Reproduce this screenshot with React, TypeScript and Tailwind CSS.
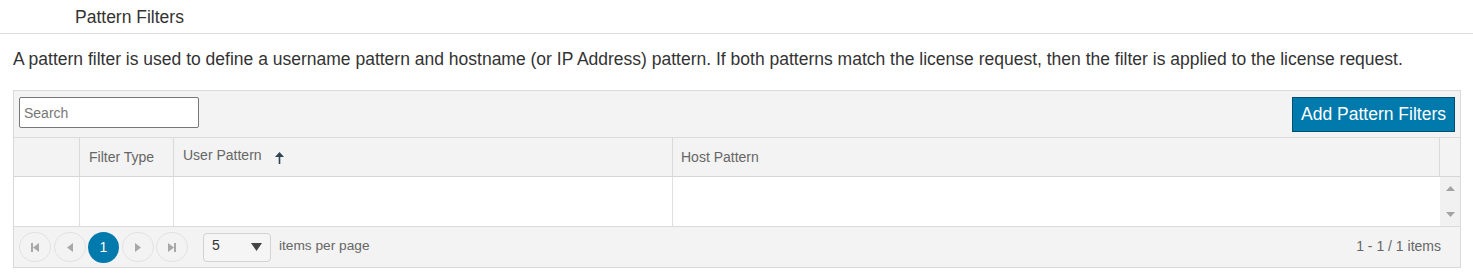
import React from "react";

const Tri = ({ dir }: { dir: "l" | "r" }) => (
  <svg width="6" height="9" viewBox="0 0 6 9" className="fill-current">
    {dir === "l" ? <polygon points="6,0 6,9 0,4.5" /> : <polygon points="0,0 0,9 6,4.5" />}
  </svg>
);

const PagerBtn = ({ children }: { children: React.ReactNode }) => (
  <div className="w-[32px] h-[30px] rounded-full border border-[#e2e2e2] flex items-center justify-center text-[#a8a8a8]">
    {children}
  </div>
);

export default function App() {
  return (
    <div className="w-[1473px] h-[279px] bg-white font-['Liberation_Sans',Arial,sans-serif] text-[#333]">
      <div className="h-[34px] border-b border-[#dcdcdc] pl-[75px] pt-[2px] flex items-center text-[17.5px] text-[#333]">
        Pattern Filters
      </div>
      <div className="mt-[15px] pl-[13px] text-[17.5px] leading-[20px] text-[#333]">
        A pattern filter is used to define a username pattern and hostname (or IP Address) pattern. If both patterns match the license request, then the filter is applied to the license request.
      </div>
      <div className="mt-[21px] ml-[13px] w-[1448px] border border-[#d9d9d9] text-[14px]">
        {/* toolbar */}
        <div className="h-[47px] bg-[#f3f3f3] border-b border-[#dcdcdc] flex items-start justify-between px-[5px] pt-[6px]">
          <input
            placeholder="Search"
            className="w-[180px] h-[31px] border border-[#777] rounded-[2px] bg-white px-[4px] text-[14px] text-[#333] placeholder:text-[#777] outline-none font-['Liberation_Sans',Arial,sans-serif]"
          />
          <button className="h-[35px] w-[163px] bg-[#0079ad] border border-[#004f72] text-white text-[17.5px] font-['Liberation_Sans',Arial,sans-serif]">
            Add Pattern Filters
          </button>
        </div>
        {/* header */}
        <div className="flex h-[39px] bg-[#f3f3f3] border-b border-[#d6d6d6] text-[#666]">
          <div className="w-[66px] border-r border-[#dadada]" />
          <div className="w-[94px] border-r border-[#dadada] flex items-center pl-[9px]">Filter Type</div>
          <div className="w-[499px] border-r border-[#dadada] flex items-center pl-[9px]">
            <span className="mb-[4px]">User Pattern</span>
            <svg width="9" height="12" viewBox="0 0 9 12" className="ml-[13px] mt-[2px]">
              <polygon points="4.5,0 9,5 5.3,5 5.3,12 3.7,12 3.7,5 0,5" fill="#2e4452" />
            </svg>
          </div>
          <div className="w-[767px] border-r border-[#dadada] flex items-center pl-[8px]">Host Pattern</div>
          <div className="w-[20px]" />
        </div>
        {/* body */}
        <div className="flex h-[50px] border-b border-[#dadada]">
          <div className="w-[66px] border-r border-[#e0e0e0]" />
          <div className="w-[94px] border-r border-[#e0e0e0]" />
          <div className="w-[499px] border-r border-[#e0e0e0]" />
          <div className="w-[767px]" />
          <div className="w-[20px] bg-[#f1f1f1] flex flex-col items-center justify-between py-[9px]">
            <svg width="9" height="5" viewBox="0 0 9 5"><polygon points="0,5 9,5 4.5,0" fill="#a3a3a3" /></svg>
            <svg width="9" height="5" viewBox="0 0 9 5"><polygon points="0,0 9,0 4.5,5" fill="#a3a3a3" /></svg>
          </div>
        </div>
        {/* pager */}
        <div className="h-[40px] bg-[#f3f3f3] flex items-center pl-[5px] pr-[19px] text-[#666]">
          <div className="flex items-center gap-[2.5px]">
            <PagerBtn>
              <div className="flex items-center">
                <div className="w-[2px] h-[9px] bg-current" />
                <Tri dir="l" />
              </div>
            </PagerBtn>
            <PagerBtn>
              <Tri dir="l" />
            </PagerBtn>
            <div className="w-[31px] h-[31px] rounded-full bg-[#0079ad] text-white flex items-center justify-center text-[14px]">
              1
            </div>
            <PagerBtn>
              <Tri dir="r" />
            </PagerBtn>
            <PagerBtn>
              <div className="flex items-center">
                <Tri dir="r" />
                <div className="w-[2px] h-[9px] bg-current" />
              </div>
            </PagerBtn>
          </div>
          <div className="ml-[15px] w-[68px] h-[29px] border border-[#d2d2d2] rounded-[4px] bg-[#f5f5f5] flex items-center justify-between pl-[8px] pr-[8px] text-[#333]">
            <span className="mb-[3px]">5</span>
            <svg width="11" height="8" viewBox="0 0 11 8"><polygon points="0,0 11,0 5.5,8" fill="#444" /></svg>
          </div>
          <span className="ml-[8px] mb-[1px] text-[13.7px]">items per page</span>
          <span className="ml-auto mb-[1px]">1 - 1 / 1 items</span>
        </div>
      </div>
    </div>
  );
}
